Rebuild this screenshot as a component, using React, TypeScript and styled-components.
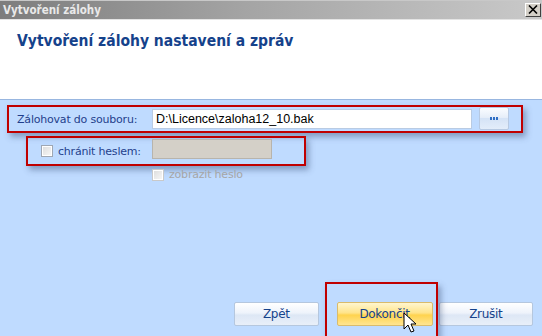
import React, { useState } from 'react';
import styled, { createGlobalStyle } from 'styled-components';

const GlobalStyle = createGlobalStyle`
  html, body {
    margin: 0;
    padding: 0;
    width: 542px;
    height: 336px;
    overflow: hidden;
    background: #bfdbff;
  }
  * {
    box-sizing: border-box;
  }
`;

const Window = styled.div`
  display: flex;
  flex-direction: column;
  width: 542px;
  height: 336px;
  font-family: 'DejaVu Sans', Verdana, sans-serif;
  background: #bfdbff;
  overflow: hidden;
`;

const TitleBar = styled.div`
  display: flex;
  align-items: center;
  justify-content: space-between;
  height: 20px;
  padding: 0 1px 1px 3px;
  background: linear-gradient(to right, #7d7d7d 0%, #a4a4a4 45%, #c9c9c9 100%);
  border-top: 1px solid #c8c8c8;
  border-bottom: 1px solid #e4e4e4;
`;

const TitleText = styled.span`
  font-family: 'DejaVu Sans Condensed', 'DejaVu Sans', sans-serif;
  font-stretch: condensed;
  font-size: 11.5px;
  font-weight: bold;
  color: #e9e9e9;
`;

const CloseButton = styled.button`
  display: flex;
  align-items: center;
  justify-content: center;
  width: 16px;
  height: 14px;
  padding: 0;
  background: #d4d0c8;
  border: 1px solid;
  border-color: #ffffff #404040 #404040 #ffffff;
`;

const Header = styled.div`
  height: 80px;
  padding: 12px 17px 0;
  background: #ffffff;
  border-bottom: 1px solid #98b6e0;
`;

const Heading = styled.h1`
  margin: 0;
  font-family: 'DejaVu Sans Condensed', 'DejaVu Sans', sans-serif;
  font-stretch: condensed;
  font-size: 15.5px;
  font-weight: bold;
  color: #15428b;
`;

const Body = styled.div`
  flex: 1;
  display: flex;
  flex-direction: column;
  padding-top: 5px;
`;

const Highlight = styled.div<{ $left: number; $width: number; $height: number }>`
  display: flex;
  align-items: center;
  margin-left: ${(p) => p.$left}px;
  width: ${(p) => p.$width}px;
  height: ${(p) => p.$height}px;
  border: 2px solid #c00000;
  box-shadow: 3px 4px 6px rgba(60, 80, 120, 0.45);
`;

const Label = styled.span<{ $width: number; $disabled?: boolean }>`
  width: ${(p) => p.$width}px;
  font-size: 11px;
  letter-spacing: -0.2px;
  color: ${(p) => (p.$disabled ? '#a6a6a6' : '#1f3f8c')};
  white-space: nowrap;
`;

const TextInput = styled.div<{ $width: number; $height: number; $disabled?: boolean }>`
  display: flex;
  align-items: center;
  width: ${(p) => p.$width}px;
  height: ${(p) => p.$height}px;
  padding-left: 3px;
  font-family: 'Liberation Sans', Arial, sans-serif;
  font-size: 12.5px;
  color: #000000;
  background: ${(p) => (p.$disabled ? '#d4d0c8' : '#ffffff')};
  border: 1px solid ${(p) => (p.$disabled ? '#b8b4ac' : '#b9cbe3')};
`;

const BrowseButton = styled.button`
  display: flex;
  align-items: center;
  justify-content: center;
  width: 30px;
  height: 23px;
  margin-left: 7px;
  margin-top: -2px;
  padding: 0;
  border: 1px solid #b7c9e2;
  border-radius: 2px;
  background: linear-gradient(to bottom, #fafcff 0%, #e6eef9 45%, #d5e3f6 50%, #e3edfa 100%);
`;

const Dots = styled.span`
  display: flex;
  gap: 1px;
  span {
    width: 2px;
    height: 3px;
    background: #2f6fc5;
  }
`;

const Box = styled.span<{ $disabled?: boolean }>`
  display: inline-block;
  width: 12px;
  height: 12px;
  margin-right: 5px;
  border: 1px solid ${(p) => (p.$disabled ? '#c9c9c9' : '#9fa7b3')};
  background: linear-gradient(135deg, #dcdcdc 0%, #f8f8f8 100%);
  box-shadow: inset 0 0 0 1px #ffffff;
`;

const CheckRow = styled.label<{ $left: number }>`
  display: flex;
  align-items: center;
  padding-left: ${(p) => p.$left}px;
`;

const Footer = styled.div`
  margin-top: auto;
  display: flex;
  align-items: center;
  padding: 0 9px 10px 234px;
`;

const ActionButton = styled.button<{ $primary?: boolean; $width: number }>`
  width: ${(p) => p.$width}px;
  height: 24px;
  padding: 0;
  font-family: 'DejaVu Sans', Verdana, sans-serif;
  font-size: 12px;
  letter-spacing: -0.3px;
  color: #15428b;
  border-radius: 2px;
  border: 1px solid ${(p) => (p.$primary ? '#d9bb6c' : '#b5c7de')};
  background: ${(p) =>
    p.$primary
      ? 'linear-gradient(to bottom, #fff6cf 0%, #ffe48a 45%, #ffd34e 55%, #ffe591 100%)'
      : 'linear-gradient(to bottom, #ffffff 0%, #eef3fb 45%, #dde7f5 55%, #e8eff9 100%)'};
`;

const FocusWrap = styled.div`
  position: relative;
  margin: 0 6px 0 18px;
`;

const FocusFrame = styled.div`
  position: absolute;
  left: -12px;
  top: -20px;
  width: 113px;
  height: 70px;
  border: 2px solid #c00000;
  box-shadow: 3px 4px 6px rgba(60, 80, 120, 0.45);
  pointer-events: none;
`;

const Cursor = styled.svg`
  position: absolute;
  left: 66px;
  top: 10px;
`;

const App = () => {
  const [path] = useState('D:\\Licence\\zaloha12_10.bak');

  return (
    <>
      <GlobalStyle />
      <Window>
        <TitleBar>
          <TitleText>Vytvoření zálohy</TitleText>
          <CloseButton>
            <svg width="10" height="9" viewBox="0 0 10 9">
              <path d="M1 0.5 L9 8.5 M9 0.5 L1 8.5" stroke="#000" strokeWidth="1.6" />
            </svg>
          </CloseButton>
        </TitleBar>
        <Header>
          <Heading>Vytvoření zálohy nastavení a zpráv</Heading>
        </Header>
        <Body>
          <Highlight $left={7} $width={516} $height={28}>
            <Label $width={143} style={{ paddingLeft: 8 }}>Zálohovat do souboru:</Label>
            <TextInput $width={320} $height={20}>{path}</TextInput>
            <BrowseButton>
              <Dots>
                <span />
                <span />
                <span />
              </Dots>
            </BrowseButton>
          </Highlight>
          <Highlight $left={26} $width={280} $height={30} style={{ marginTop: 3 }}>
            <CheckRow $left={13}>
              <Box />
              <Label $width={94}>chránit heslem:</Label>
            </CheckRow>
            <TextInput $width={120} $height={20} $disabled style={{ marginTop: -5 }} />
          </Highlight>
          <CheckRow $left={152} style={{ marginTop: 2 }}>
            <Box $disabled />
            <Label $width={80} $disabled>zobrazit heslo</Label>
          </CheckRow>
          <Footer>
            <ActionButton $width={85}>Zpět</ActionButton>
            <FocusWrap>
              <ActionButton $width={96} $primary>Dokončit</ActionButton>
              <FocusFrame />
              <Cursor width="14" height="22" viewBox="0 0 14 22">
                <path
                  d="M1 1 L1 17 L5 13 L8 20 L11 19 L8 12 L13 12 Z"
                  fill="#ffffff"
                  stroke="#000000"
                  strokeWidth="1"
                  strokeLinejoin="miter"
                />
              </Cursor>
            </FocusWrap>
            <ActionButton $width={95}>Zrušit</ActionButton>
          </Footer>
        </Body>
      </Window>
    </>
  );
};

export default App;
